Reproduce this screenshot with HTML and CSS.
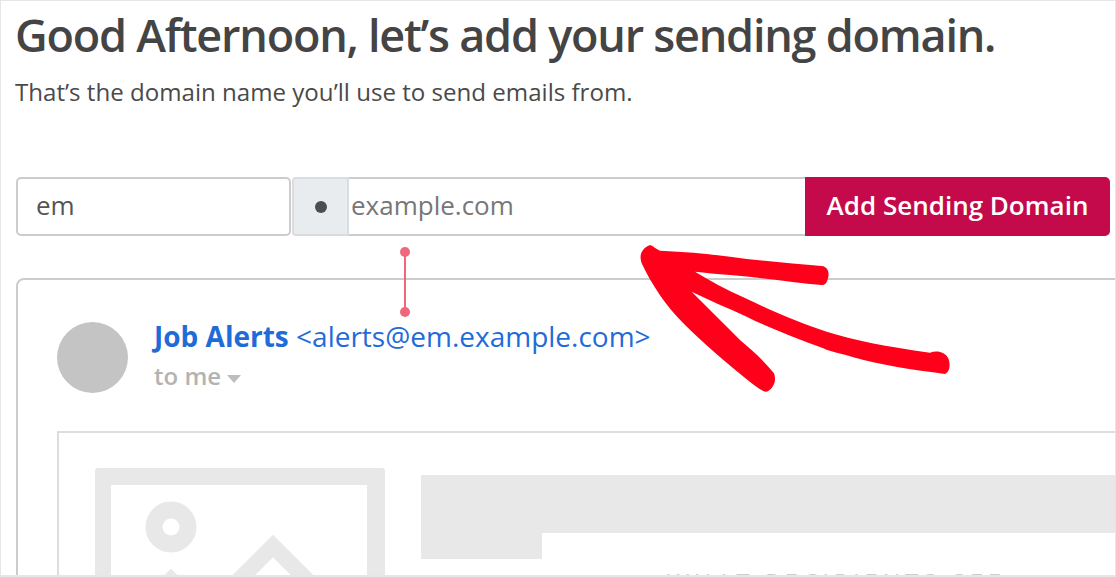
FILE: index.html
```html
<!DOCTYPE html>
<html lang="en">
<head>
    <meta charset="UTF-8">
    <title>Add Sending Domain</title>
    <link rel="stylesheet" href="styles.css">
</head>
<body>
    <div class="frame">
        <h1 class="heading">Good Afternoon, let’s add your sending domain.</h1>
        <p class="subtext">That’s the domain name you’ll use to send emails from.</p>

        <form class="domain_form">
            <div class="sub_box">em</div>
            <div class="dot_box"><span class="dot"></span></div>
            <div class="domain_box">example.com</div>
            <div class="add_button">Add Sending Domain</div>
        </form>

        <div class="gap_marker">
            <span class="marker_line"></span>
        </div>

        <div class="mail_card">
            <div class="mail_head">
                <div class="avatar"></div>
                <div class="mail_meta">
                    <div class="sender"><b>Job Alerts</b> &lt;alerts@em.example.com&gt;</div>
                    <div class="to_me">to me <span class="caret"></span></div>
                </div>
            </div>
            <div class="mail_body">
                <svg class="placeholder" viewBox="0 0 290 110" width="290" height="110">
                    <path d="M3 0 H287 Q290 0 290 3 V110 H272 V17 H16 V110 H0 V3 Q0 0 3 0 Z" fill="#e8e8e8"/>
                    <circle cx="76" cy="59" r="17" fill="none" stroke="#e8e8e8" stroke-width="17"/>
                    <path d="M118 138 L178 78 L238 138" fill="none" stroke="#e8e8e8" stroke-width="16"/>
                    <path d="M50 138 L76 112 L102 138" fill="none" stroke="#e8e8e8" stroke-width="16"/>
                </svg>
                <div class="banner">
                    <div class="banner_fill"></div>
                    <div class="banner_row">
                        <div class="banner_tab"></div>
                        <div class="banner_text">WHAT RECIPIENTS SEE</div>
                    </div>
                </div>
            </div>
        </div>
    </div>

    <svg class="arrow" viewBox="0 0 1488 750" width="496" height="250">
        <path fill="#fe0019" d="M90 255 C100 258 108 268 120 272 C200 275 260 282 330 290 C420 302 520 312 605 318 C622 320 628 335 625 350 C622 365 618 375 605 375 C520 368 420 352 330 345 C290 342 255 338 225 335 C270 362 320 390 370 412 C450 450 540 490 620 515 C700 540 800 560 930 578 C950 570 975 575 985 595 C992 615 990 635 975 642 C880 630 780 615 700 592 C660 580 630 575 610 565 C530 535 450 505 380 470 C320 442 265 420 215 395 C260 440 310 490 360 540 C395 570 430 600 462 640 C470 660 462 685 440 695 C425 695 410 680 395 670 C320 610 250 550 190 490 C140 440 95 375 65 310 C58 290 60 268 90 255 Z"/>
    </svg>
</body>
</html>
```

FILE: styles.css
```css
html, body
{
    margin: 0;
    height: 100%;
    overflow: hidden;
    background-color: #ffffff;
}
.frame
{
    box-sizing: border-box;
    width: 1116px;
    height: 577px;
    overflow: hidden;
    padding: 7px 0 0 15px;
    border: 1px solid #e6e6e6;
    border-bottom-width: 2px;
    font-family: "Open Sans", sans-serif;
    color: #444444;
}
.heading
{
    margin: 0 0 0 -1px;
    font-size: 45px;
    line-height: 54px;
    font-weight: 600;
    letter-spacing: -1.22px;
    white-space: nowrap;
}
.subtext
{
    margin: 13px 0 0 -1px;
    font-size: 24.1px;
    line-height: 34px;
    color: #4a4a4a;
    white-space: nowrap;
}
.domain_form
{
    display: flex;
    width: 1094px;
    height: 59px;
    margin-top: 68px;
    font-size: 26px;
}
.sub_box
{
    box-sizing: border-box;
    width: 275px;
    padding-left: 18px;
    line-height: 53px;
    border: 2px solid #cccccc;
    border-radius: 5px;
    color: #555555;
}
.dot_box
{
    box-sizing: border-box;
    display: flex;
    align-items: center;
    justify-content: center;
    width: 57px;
    margin-left: 1px;
    background-color: #e9ecef;
    border: 2px solid #d9dce0;
    border-radius: 4px 0 0 4px;
}
.dot
{
    width: 12px;
    height: 12px;
    border-radius: 50%;
    background-color: #4a4d52;
}
.domain_box
{
    box-sizing: border-box;
    flex: 1;
    padding-left: 2px;
    line-height: 53px;
    border-top: 2px solid #cccccc;
    border-bottom: 2px solid #cccccc;
    color: #777777;
}
.add_button
{
    width: 305px;
    line-height: 56px;
    text-align: center;
    font-weight: 600;
    color: #ffffff;
    background-color: #c40a4a;
    border-radius: 0 5px 5px 0;
}
.gap_marker
{
    display: flex;
    justify-content: center;
    width: 778px;
    height: 42px;
}
.marker_line
{
    position: relative;
    width: 2px;
    height: 60px;
    margin-top: 16px;
    background-color: #f0667c;
    z-index: 1;
}
.marker_line::before,
.marker_line::after
{
    content: "";
    position: absolute;
    left: -4px;
    width: 10px;
    height: 10px;
    border-radius: 50%;
    background-color: #f0667c;
}
.marker_line::before
{
    top: -5px;
}
.marker_line::after
{
    bottom: -5px;
}
.mail_card
{
    box-sizing: border-box;
    width: 1120px;
    height: 320px;
    padding: 42px 0 0 39px;
    border: 2px solid #cccccc;
    border-radius: 8px;
}
.mail_head
{
    display: flex;
    gap: 26px;
}
.avatar
{
    width: 71px;
    height: 71px;
    border-radius: 50%;
    background-color: #c4c4c4;
}
.sender
{
    margin-top: -3px;
    font-size: 28px;
    line-height: 34px;
    color: #1f6bd8;
    white-space: nowrap;
}
.to_me
{
    margin-top: 8px;
    font-size: 24px;
    line-height: 30px;
    font-weight: 600;
    color: #b3b3b3;
}
.caret
{
    display: inline-block;
    width: 0;
    height: 0;
    vertical-align: 2px;
    border-left: 7px solid transparent;
    border-right: 7px solid transparent;
    border-top: 8px solid #bdbdbd;
}
.mail_body
{
    display: flex;
    box-sizing: border-box;
    width: 1070px;
    height: 160px;
    margin-top: 38px;
    padding: 35px 0 0 36px;
    border: 2px solid #dddddd;
}
.placeholder
{
    flex: none;
}
.banner
{
    margin: 7px 0 0 36px;
    flex: 1;
}
.banner_fill
{
    height: 58px;
    background-color: #e8e8e8;
}
.banner_row
{
    display: flex;
}
.banner_tab
{
    width: 121px;
    height: 26px;
    background-color: #e8e8e8;
}
.banner_text
{
    margin: 32px 0 0 125px;
    font-size: 24px;
    letter-spacing: 4.7px;
    color: #cccccc;
    white-space: nowrap;
}
.arrow
{
    position: absolute;
    left: 620px;
    top: 160px;
}
```
